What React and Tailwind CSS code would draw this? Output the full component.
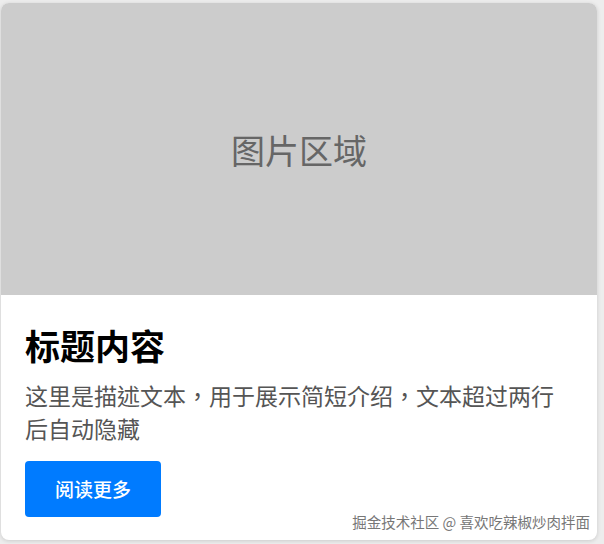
import React from "react";

const font = { fontFamily: "'Noto Sans CJK SC', 'Noto Sans', sans-serif" };
const descFont = { fontFamily: "'Noto Sans CJK TC', 'Noto Sans CJK SC', sans-serif" };

export default function App() {
  return (
    <div className="w-[604px] h-[544px] bg-[#ededed] relative overflow-hidden" style={font}>
      <div className="absolute left-[1px] top-[3px] w-[596px] h-[537px] rounded-lg bg-white overflow-hidden shadow-[0_1px_4px_rgba(0,0,0,0.15)] flex flex-col">
        <div className="h-[292px] bg-[#cccccc] flex items-center justify-center shrink-0">
          <span className="text-[34px] text-[#666666]">图片区域</span>
        </div>
        <div className="px-6 pt-[26px]">
          <h2 className="text-[35px] leading-[48px] font-bold text-black">标题内容</h2>
          <p
            lang="zh-Hant"
            className="mt-[10px] text-[23px] leading-[33px] text-[#555555] line-clamp-2"
            style={descFont}
          >
            这里是描述文本，用于展示简短介绍，文本超过两行后自动隐藏
          </p>
          <button className="mt-[16px] w-[136px] h-[56px] rounded bg-[#007bff] text-white text-[19px] font-medium">
            阅读更多
          </button>
        </div>
      </div>
      <div className="absolute right-[14px] bottom-[12px] text-[14.5px] leading-[20px] text-[#777777] [text-shadow:0_0_2px_#fff]">
        掘金技术社区 @ 喜欢吃辣椒炒肉拌面
      </div>
    </div>
  );
}
